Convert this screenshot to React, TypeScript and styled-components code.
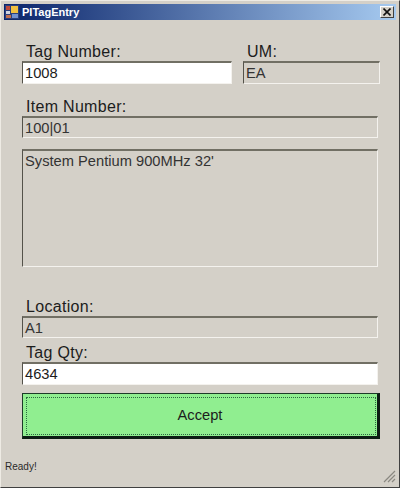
import React from 'react'
import styled, { createGlobalStyle } from 'styled-components'

const Global = createGlobalStyle`
  html, body { margin: 0; padding: 0; background: #d4d0c8; }
  * { box-sizing: border-box; }
`

const Window = styled.div`
  width: 400px;
  height: 488px;
  display: flex;
  flex-direction: column;
  padding: 4px;
  background: #d4d0c8;
  border: 1px solid;
  border-color: #eeebe4 #404040 #404040 #eeebe4;
  font-family: "Liberation Sans", Arial, sans-serif;
  color: #1c1c1c;
`

const TitleBar = styled.div`
  height: 16px;
  margin: -1px -1px 0;
  padding: 0 2px 0 1px;
  flex: none;
  display: flex;
  align-items: center;
  gap: 3px;
  background: linear-gradient(90deg, #0a246a 0%, #a6caf0 100%);
`

const TitleText = styled.span`
  flex: 1;
  font-size: 11px;
  font-weight: bold;
  color: #fff;
`

const CloseButton = styled.div`
  width: 14px;
  height: 12px;
  display: flex;
  align-items: center;
  justify-content: center;
  background: #d4d0c8;
  border: 1px solid;
  border-color: #fff #404040 #404040 #fff;
`

const Form = styled.div`
  flex: 1;
  display: flex;
  flex-direction: column;
  padding: 23px 0 0 17px;
`

const TopRow = styled.div`
  display: flex;
  gap: 11px;
`

const Column = styled.div<{ $width: number; $top?: number }>`
  width: ${p => p.$width}px;
  margin-top: ${p => p.$top ?? 0}px;
  flex: none;
`

const Label = styled.div`
  height: 18px;
  padding-left: 4px;
  font-size: 16px;
  line-height: 18px;
  letter-spacing: 0.3px;
`

const Field = styled.div<{ $white?: boolean; $height?: number }>`
  height: ${p => p.$height ?? 23}px;
  padding: 1px 0 0 2px;
  font-size: 14.7px;
  line-height: 19px;
  background: ${p => (p.$white ? '#fff' : '#d4d0c8')};
  color: ${p => (p.$white ? '#1c1c1c' : '#333')};
  border-style: solid;
  border-width: 2px 1px 1px 1px;
  border-color: #716f64 #f4f2ee #f4f2ee #54524a;
`

const AcceptButton = styled.button`
  width: 358px;
  height: 46px;
  margin-top: 8px;
  padding: 0;
  font-family: inherit;
  font-size: 14.7px;
  color: #1c1c1c;
  background: #90ee90;
  border-style: solid;
  border-width: 1px 3px 3px 1px;
  border-color: #1c3a28 #0c1c14 #0c1c14 #1c3a28;
  outline: 1px dotted #2a6a40;
  outline-offset: -5px;
`

const StatusBar = styled.div`
  height: 26px;
  flex: none;
  display: flex;
  justify-content: space-between;
  font-size: 10px;
  color: #2a2a2a;
`

const StatusText = styled.span`
  padding-top: 4px;
`

const GripIcon = styled.svg`
  align-self: flex-end;
  margin-right: -1px;
`

const Grip = () => (
  <GripIcon width="14" height="14" viewBox="0 0 14 14">
    <path d="M13 2 L2 13 M13 6 L6 13 M13 10 L10 13" stroke="#8a8880" strokeWidth="1.2" fill="none" />
  </GripIcon>
)

const AppIcon = () => (
  <svg width="14" height="14" viewBox="0 0 14 14">
    <rect x="0" y="0" width="14" height="14" fill="#2a3f7c" />
    <rect x="1" y="1" width="4" height="4" fill="#c04a3a" />
    <rect x="6" y="1" width="7" height="7" fill="#f0c040" />
    <rect x="1" y="6" width="4" height="3" fill="#d0d4e0" />
    <rect x="1" y="10" width="5" height="3" fill="#c07050" />
    <rect x="7" y="9" width="6" height="4" fill="#7090d0" />
  </svg>
)

export default function App() {
  return (
    <>
      <Global />
      <Window>
        <TitleBar>
          <AppIcon />
          <TitleText>PITagEntry</TitleText>
          <CloseButton>
            <svg width="8" height="8" viewBox="0 0 8 8">
              <path d="M0.5 0.5 L7.5 7.5 M7.5 0.5 L0.5 7.5" stroke="#111" strokeWidth="1.6" />
            </svg>
          </CloseButton>
        </TitleBar>
        <Form>
          <TopRow>
            <Column $width={210}>
              <Label>Tag Number:</Label>
              <Field $white>1008</Field>
            </Column>
            <Column $width={137}>
              <Label>UM:</Label>
              <Field>EA</Field>
            </Column>
          </TopRow>
          <Column $width={356} $top={14}>
            <Label>Item Number:</Label>
            <Field $height={22}>100|01</Field>
          </Column>
          <Column $width={356} $top={11}>
            <Field $height={118}>System Pentium 900MHz 32'</Field>
          </Column>
          <Column $width={356} $top={31}>
            <Label>Location:</Label>
            <Field $height={22}>A1</Field>
          </Column>
          <Column $width={356} $top={6}>
            <Label>Tag Qty:</Label>
            <Field $white>4634</Field>
          </Column>
          <AcceptButton>Accept</AcceptButton>
        </Form>
        <StatusBar>
          <StatusText>Ready!</StatusText>
          <Grip />
        </StatusBar>
      </Window>
    </>
  )
}
